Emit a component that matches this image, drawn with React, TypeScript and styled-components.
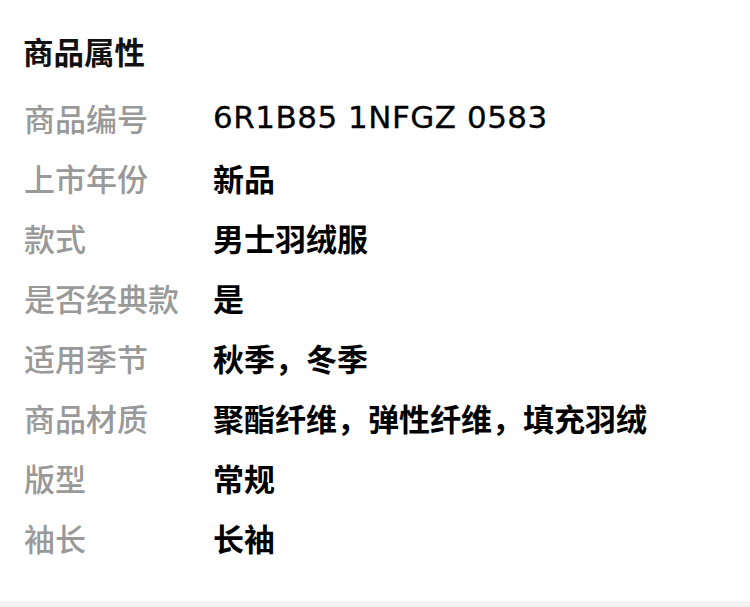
import React from 'react'
import styled, { createGlobalStyle } from 'styled-components';

const GlobalStyle = createGlobalStyle`
    body {
        margin: 0;
        background: #fff;
        font-family: "Noto Sans CJK SC", "Noto Sans", sans-serif;
    }
`;

const Section = styled.section`
    padding: 31px 23px 34px 24px;
    background: #fff;
`;

const Title = styled.h2`
    margin: 0 0 16px -1px;
    font-size: 30.5px;
    line-height: 40px;
    font-weight: 700;
    color: #111;
`;

const Row = styled.div`
    display: flex;
    align-items: center;
    height: 60px;
    font-size: 31px;
`;

const Label = styled.span`
    width: 189px;
    flex-shrink: 0;
    color: #999;
    font-weight: 500;
`;

const Value = styled.span`
    color: #000;
    font-weight: 700;

    &.latin {
        font-family: "DejaVu Sans", sans-serif;
        font-weight: 400;
        letter-spacing: 0.5px;
        -webkit-text-stroke: 0.3px #000;
    }
`;

const Footer = styled.div`
    height: 8px;
    background: #f2f2f3;
`;

const attributes = [
    { label: '商品编号', value: '6R1B85 1NFGZ 0583', latin: true },
    { label: '上市年份', value: '新品' },
    { label: '款式', value: '男士羽绒服' },
    { label: '是否经典款', value: '是' },
    { label: '适用季节', value: '秋季，冬季' },
    { label: '商品材质', value: '聚酯纤维，弹性纤维，填充羽绒' },
    { label: '版型', value: '常规' },
    { label: '袖长', value: '长袖' },
];

export default function App() {
    return (
        <>
            <GlobalStyle />
            <Section>
                <Title>商品属性</Title>
                {attributes.map(item => (
                    <Row key={item.label}>
                        <Label>{item.label}</Label>
                        <Value className={item.latin ? 'latin' : undefined}>{item.value}</Value>
                    </Row>
                ))}
            </Section>
            <Footer />
        </>
    )
}
